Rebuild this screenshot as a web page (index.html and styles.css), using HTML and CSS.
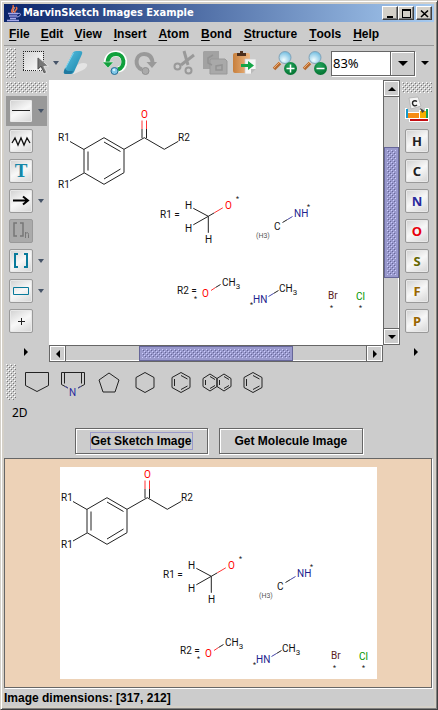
FILE: index.html
```html
<!DOCTYPE html>
<html lang="en">
<head>
<meta charset="utf-8">
<title>MarvinSketch Images Example</title>
<link rel="stylesheet" href="styles.css">
</head>
<body>
<svg class="defs" width="0" height="0" aria-hidden="true">
  <defs>
    <linearGradient id="gPaper" x1="0" y1="0" x2="1" y2="1"><stop offset="0" stop-color="#d4d4d4"/><stop offset="1" stop-color="#fff"/></linearGradient>
    <linearGradient id="gBlue" x1="0" y1="0" x2="1" y2="1"><stop offset="0" stop-color="#5cc3e4"/><stop offset="1" stop-color="#1583a8"/></linearGradient>
    <linearGradient id="gBoard" x1="0" y1="0" x2="1" y2="0"><stop offset="0" stop-color="#c77f3c"/><stop offset="1" stop-color="#efb985"/></linearGradient>
    <radialGradient id="gLens" cx=".4" cy=".7" r=".8"><stop offset="0" stop-color="#f2fdff"/><stop offset="1" stop-color="#5fb4dc"/></radialGradient>
    <radialGradient id="gBall" cx=".4" cy=".3" r=".8"><stop offset="0" stop-color="#21a45c"/><stop offset="1" stop-color="#006c2b"/></radialGradient>
  </defs>
</svg>
<div class="window">
  <header class="titlebar">
    <svg class="cup" width="16" height="18" viewBox="0 0 16 18" fill="none">
      <path d="M7 9C3 6 9 5 7 1M9 9c-2-3 4-3 1-6" stroke="#f07040" stroke-width="1.5"/>
      <path d="M8 8c-2-2 1-3 0-5" stroke="#fbd0b8"/>
      <path d="M2 9.500h10M3 12h8M4 14.500h6M1 16.500h12" stroke="#a6a9e8" stroke-width="1.500"/>
      <path d="M3 10.700h9M4 13.300h7" stroke="#4a50a8"/>
      <path d="M12 9.500c4-1 3 3-1 3.500" stroke="#a6a9e8"/>
    </svg>
    <h1>MarvinSketch Images Example</h1>
    <div class="winbtns">
      <button aria-label="Minimize"><svg width="9" height="9" viewBox="0 0 9 9"><path d="M1 7h6v2H1z"/></svg></button>
      <button aria-label="Maximize"><svg width="9" height="9" viewBox="0 0 9 9"><path fill-rule="evenodd" d="M0 0h9v9H0zM1 2v6h7V2z"/></svg></button>
      <button class="close" aria-label="Close"><svg width="9" height="9" viewBox="0 0 9 9"><path d="M1 1.500l7 6.500M8 1.500L1 8" stroke="#000" stroke-width="1.600"/></svg></button>
    </div>
  </header>

  <nav class="menubar">
    <button><u>F</u>ile</button><button><u>E</u>dit</button><button><u>V</u>iew</button><button><u>I</u>nsert</button><button><u>A</u>tom</button><button><u>B</u>ond</button><button><u>S</u>tructure</button><button><u>T</u>ools</button><button><u>H</u>elp</button>
  </nav>

  <div class="toolbar">
    <div class="grip grip-tall"></div>
    <div class="group">
      <button class="tool wide" aria-label="Select">
        <svg width="26" height="24" viewBox="0 0 26 24"><path d="M1 1h19v19H1z" fill="url(#gPaper)"/><path d="M0 .5h21M0 19.500h21M.5 0v20M20.500 0v20" fill="none" stroke="#222" stroke-dasharray="1 1"/><path d="M14.500 5.500v14l3.300-3 3 6.500 3-1.500-3-6 4.500-.5z" fill="#777" stroke="#eee" stroke-width=".8"/><path d="M15 7v11l3-3 3.500 7" fill="none" stroke="#555"/></svg>
      </button>
      <svg class="drop" width="6" height="4" viewBox="0 0 6 4"><path d="M0 0h6L3 4z"/></svg>
      <button class="tool" aria-label="Erase">
        <svg width="24" height="24" viewBox="0 0 24 24"><path d="M4 22l12-9q5-2 8 0 1 3-4 6l-9 4z" fill="#e4e4e4"/><path d="M10 1.500Q11 0 13 0h4q3 0 2 3l-8 18q-1 2-3 2H3q-3 0-2-3z" fill="url(#gBlue)"/><path d="M2 17q1 3 3 3h5l-1 2q-1 1-3 1H3q-3 0-2-3z" fill="#2079a0"/><path d="M10.500 2L2.500 17" stroke="#7fd4ee"/></svg>
      </button>
    </div>
    <div class="group">
      <button class="tool" aria-label="Undo">
        <svg width="24" height="24" viewBox="0 0 24 24" fill="none"><path d="M4 13C3 6 8 2.500 13 2.500c10 0 11 15 2 16" stroke="#fff" stroke-width="6"/><path d="M4.500 13C4.500 6 8 3 13 3c9 0 10 13 2 15.500" stroke="#10a03c" stroke-width="4"/><path d="M-.5 11h11L5 17z" fill="#10a03c" stroke="#e4f4e8" stroke-width=".6"/><circle cx="11.500" cy="20" r="3.500" fill="#80c8e8" stroke="#266c94"/><circle cx="11" cy="19" r="1.300" fill="#d4f2ff"/></svg>
      </button>
      <button class="tool" aria-label="Redo" disabled>
        <svg width="24" height="24" viewBox="0 0 24 24" fill="none"><path d="M19.500 13C19.500 6 16 3 11 3 2 3 1 16 9 18.500" stroke="#999" stroke-width="4"/><path d="M13.500 11h10.500L19 17z" fill="#999"/><circle cx="12.500" cy="20" r="3.500" fill="#aaa" stroke="#919191"/></svg>
      </button>
    </div>
    <div class="group">
      <button class="tool" aria-label="Cut" disabled>
        <svg width="24" height="24" viewBox="0 0 24 24" fill="none" stroke="#999"><path d="M11 0l4 14M21 4L8 14" stroke-width="3"/><circle cx="4.500" cy="15.500" r="3" stroke-width="2"/><circle cx="15.500" cy="19.500" r="3" stroke-width="2"/></svg>
      </button>
      <button class="tool" aria-label="Copy" disabled>
        <svg width="24" height="24" viewBox="0 0 24 24"><path d="M1 0h15v18H0V1z" fill="#a2a2a2"/><path d="M8 8h14l2 2v13H7V9z" fill="#a9a9a9" stroke="#999"/><path d="M10 4L5 7v5l4 2M19 14v5h-6v-4z" fill="none" stroke="#939393" stroke-width="1.500"/></svg>
      </button>
      <button class="tool" aria-label="Paste">
        <svg width="24" height="24" viewBox="0 0 24 24"><rect y="2" width="17" height="20" rx="2" fill="url(#gBoard)"/><path d="M4 4V2h3V0h3v2h3v3H4z" fill="#4d2f1c"/><path d="M12 8h11v10l-5 5h-6z" fill="#f5f5f5" stroke="#ccc" stroke-width=".7"/><path d="M23 18h-5v5z" fill="#bbb"/><path d="M8 13h7v-3l6 4.500-6 4.500v-3H8z" fill="#14a647"/></svg>
      </button>
    </div>
    <div class="group">
      <button class="tool" aria-label="Zoom in">
        <svg width="24" height="24" viewBox="0 0 24 24"><path d="M7 12l-6 6" stroke="#b76a2f" stroke-width="3.500"/><path d="M7 11l-6 6" stroke="#f0ae74"/><circle cx="12" cy="6.500" r="6" fill="url(#gLens)" stroke="#84a4b8"/><circle cx="17.500" cy="17.500" r="6.500" fill="url(#gBall)"/><path d="M13.500 17.500h8M17.500 13.500v8" stroke="#fff" stroke-width="1.500"/></svg>
      </button>
      <button class="tool" aria-label="Zoom out">
        <svg width="24" height="24" viewBox="0 0 24 24"><path d="M7 12l-6 6" stroke="#b76a2f" stroke-width="3.500"/><path d="M7 11l-6 6" stroke="#f0ae74"/><circle cx="12" cy="6.500" r="6" fill="url(#gLens)" stroke="#84a4b8"/><circle cx="17.500" cy="17.500" r="6.500" fill="url(#gBall)"/><path d="M13.500 17.500h8" stroke="#fff" stroke-width="1.500"/></svg>
      </button>
    </div>
    <div class="combo">
      <input type="text" value="83%" aria-label="Zoom level">
      <button aria-label="Show zoom levels"><svg width="10" height="5" viewBox="0 0 10 5"><path d="M0 0h10L5 5z"/></svg></button>
    </div>
    <svg class="more" width="8" height="4" viewBox="0 0 8 4"><path d="M0 0h8L4 4z"/></svg>
  </div>

  <main class="work">
    <div class="side">
      <div class="grip"></div>
      <div class="slot on"><button class="key" aria-label="Single bond"><svg width="24" height="24" viewBox="0 0 24 24"><path d="M3 11.500h18" stroke="#222"/></svg></button><svg class="drop" width="6" height="4" viewBox="0 0 6 4"><path d="M0 0h6L3 4z"/></svg></div>
      <div class="slot"><button class="key" aria-label="Chain"><svg width="24" height="24" viewBox="0 0 24 24"><path d="M3 14l3-5 3 7 3-7 3 7 3-7 3 5" fill="none" stroke="#111" stroke-width="1.300"/></svg></button></div>
      <div class="slot"><button class="key text-key" aria-label="Text">T</button></div>
      <div class="slot"><button class="key" aria-label="Arrow"><svg width="24" height="24" viewBox="0 0 24 24"><path d="M4 11.500h14M14 7.500l5 4-5 4" fill="none" stroke="#000" stroke-width="2"/></svg></button><svg class="drop" width="6" height="4" viewBox="0 0 6 4"><path d="M0 0h6L3 4z"/></svg></div>
      <div class="slot"><button class="key off" aria-label="Repeating unit" disabled><svg width="24" height="24" viewBox="0 0 24 24"><path d="M8 4H5v13h3M11 4h3v13h-3" fill="none" stroke="#777" stroke-width="1.500"/><path d="M16.500 19v-6M16.500 14.500q3-2 3 1V19" fill="none" stroke="#777"/></svg></button></div>
      <div class="slot"><button class="key" aria-label="Brackets"><svg width="24" height="24" viewBox="0 0 24 24"><path d="M9 5H6v13h3M15 5h3v13h-3" fill="none" stroke="#087a9b" stroke-width="2"/></svg></button><svg class="drop" width="6" height="4" viewBox="0 0 6 4"><path d="M0 0h6L3 4z"/></svg></div>
      <div class="slot"><button class="key" aria-label="Rectangle"><svg width="24" height="24" viewBox="0 0 24 24"><path d="M4.500 8.500h15v7h-15z" fill="none" stroke="#087a9b"/></svg></button><svg class="drop" width="6" height="4" viewBox="0 0 6 4"><path d="M0 0h6L3 4z"/></svg></div>
      <div class="slot"><button class="key" aria-label="Increase charge"><svg width="24" height="24" viewBox="0 0 24 24"><path d="M9 12.500h7M12.500 9v7" stroke="#222"/></svg></button></div>
      <button class="next" aria-label="More tools"><svg width="4" height="8" viewBox="0 0 4 8"><path d="M0 0l4 4-4 4z"/></svg></button>
    </div>

    <div class="canvas">
      <svg class="mol" width="317" height="212" viewBox="57 107 317 212">
        <g class="bonds">
          <path d="M104 137.700L124 149.300V172.700L104 184.300 84 172.700V149.300zM104 142l16.500 9.500M120.500 169L104 179M88 151.500v19M70 141.500l14 8M70 181l14-8M124 149.300l20.300-11.600 20 11.600 14-8M142 138v-9M146.500 138v-9M208.300 216.300l-15-8M208.300 216.300l-15 8.500M208.300 216.300v16.500M208.300 216.300l6-3.500M282.500 222.500l5-3M215.500 287.500l5-3M273.500 293.500l5-3"/>
          <path class="o" d="M142 129v-8.500M146.500 129v-8.500M214.300 212.800l8.500-5M211 290.500l4.500-3"/>
          <path class="n" d="M287.500 219.500l5-3M268.500 296.500l5-3"/>
        </g>
        <g class="atoms">
          <text x="58" y="141">R1</text><text x="58" y="188">R1</text><text x="178" y="141">R2</text>
          <text x="160" y="218">R1 =</text><text x="177" y="294">R2 =</text>
          <text x="185" y="209">H</text><text x="185" y="232">H</text><text x="205" y="243">H</text><text x="274" y="230">C</text>
          <text class="small" x="256" y="238">(H3)</text>
          <text x="222" y="286">CH<tspan class="sub" dy="3">3</tspan></text><text x="279" y="292">CH<tspan class="sub" dy="3">3</tspan></text>
          <text class="o" x="141" y="118">O</text><text class="o" x="225" y="209">O</text><text class="o" x="202" y="297">O</text>
          <text class="n" x="294" y="217">NH</text><text class="n" x="253" y="303">HN</text>
          <text class="br" x="328" y="299">Br</text><text class="cl" x="356" y="300">Cl</text>
          <g class="star"><text x="236" y="201">*</text><text x="307" y="209">*</text><text x="194" y="301">*</text><text x="250" y="307">*</text><text x="330" y="310">*</text><text x="359" y="310">*</text></g>
        </g>
      </svg>
    </div>

    <div class="scroll vert">
      <button aria-label="Scroll up"><svg width="8" height="4" viewBox="0 0 8 4"><path d="M4 0l4 4H0z"/></svg></button>
      <div class="track"><div class="thumb"></div></div>
      <button aria-label="Scroll down"><svg width="8" height="4" viewBox="0 0 8 4"><path d="M0 0h8L4 4z"/></svg></button>
    </div>
    <div class="scroll horiz">
      <button aria-label="Scroll left"><svg width="4" height="8" viewBox="0 0 4 8"><path d="M4 0v8L0 4z"/></svg></button>
      <div class="track"><div class="thumb"></div></div>
      <button aria-label="Scroll right"><svg width="4" height="8" viewBox="0 0 4 8"><path d="M0 0l4 4-4 4z"/></svg></button>
    </div>

    <div class="side elements">
      <div class="grip"></div>
      <div class="slot"><button class="tool" aria-label="Periodic table">
        <svg width="24" height="24" viewBox="0 0 24 24"><path d="M0 9h2v4h12v-2h6V9h4v11H0z" fill="#fff"/><path d="M1 10h2v9H1z" fill="#1499c9"/><path d="M3 14h11v5H3z" fill="#f78b12"/><path d="M15 12h6v7h-6z" fill="#f7ae00"/><path d="M21 10h2v9h-2z" fill="#12a05a"/><path d="M4 20h20v3H4z" fill="#fff"/><path d="M5 20h18v2H5z" fill="#c40d12"/><path d="M15 9l5 3-3 2z" fill="#444"/><path d="M4-1l9-1 3 9-10 3z" fill="#f4f4f4" stroke="#aaa" stroke-width=".7"/><path d="M12 2.500C10 1 7 2 7.500 4.500S10 7.500 12 6" fill="none" stroke="#222" stroke-width="1.400"/></svg>
      </button></div>
      <div class="slot"><button class="key">H</button></div>
      <div class="slot"><button class="key">C</button></div>
      <div class="slot"><button class="key n">N</button></div>
      <div class="slot"><button class="key o">O</button></div>
      <div class="slot"><button class="key s">S</button></div>
      <div class="slot"><button class="key f">F</button></div>
      <div class="slot"><button class="key f">P</button></div>
      <button class="next" aria-label="More elements"><svg width="4" height="8" viewBox="0 0 4 8"><path d="M0 0l4 4-4 4z"/></svg></button>
    </div>
  </main>

  <div class="rings">
    <div class="grip grip-tall"></div>
    <button class="tool" aria-label="Cyclopentane"><svg width="24" height="24" viewBox="0 0 24 24"><path d="M.5 2.500h23v13L12 21.500.5 15.500z"/></svg></button>
    <button class="tool" aria-label="Pyrrole"><svg width="24" height="24" viewBox="0 0 24 24"><path d="M7 18L.5 14.500v-12h23v12L17 18M3.500 3v10.500M20.500 3v10.500"/><path class="n" d="M7 18l-3-1.700M17 18l3-1.700"/><text class="n" x="8" y="26">N</text></svg></button>
    <button class="tool" aria-label="Cyclopentane small"><svg width="24" height="24" viewBox="0 0 24 24"><path d="M12 3l10 7-4 12H6L2 10z"/></svg></button>
    <button class="tool" aria-label="Cyclohexane"><svg width="24" height="24" viewBox="0 0 24 24"><path d="M12 2.500l9 5v10l-9 5-9-5v-10z"/></svg></button>
    <button class="tool" aria-label="Benzene"><svg width="24" height="24" viewBox="0 0 24 24"><path d="M12 2.500l9 5v10l-9 5-9-5v-10zM5.500 9v7M12 5.500l6.500 3.500M12 19.500l6.500-3.500"/></svg></button>
    <button class="tool" aria-label="Naphthalene"><svg width="30" height="24" viewBox="0 0 30 24"><path d="M8 4l7 4.500v8L8 21l-7-4.500v-8zM22 4l7 4.500v8L22 21l-7-4.500v-8zM3.500 10v5M8 6.500l5 3M8 18.500l5-3M17.500 10v5M22 6.500l5 3M22 18.500l5-3"/></svg></button>
    <button class="tool" aria-label="Benzene alternate"><svg width="24" height="24" viewBox="0 0 24 24"><path d="M12 2.500l9 5v10l-9 5-9-5v-10zM5.500 9v7M12 5.500l6.500 3.500M12 19.500l6.500-3.500"/></svg></button>
  </div>
  <p class="mode">2D</p>

  <div class="actions">
    <button class="focused"><span>Get Sketch Image</span></button>
    <button><span>Get Molecule Image</span></button>
  </div>

  <section class="preview">
    <svg class="mol" width="317" height="212" viewBox="57 107 317 212">
      <g class="bonds">
        <path d="M104 137.700L124 149.300V172.700L104 184.300 84 172.700V149.300zM104 142l16.500 9.500M120.500 169L104 179M88 151.500v19M70 141.500l14 8M70 181l14-8M124 149.300l20.300-11.600 20 11.600 14-8M142 138v-9M146.500 138v-9M208.300 216.300l-15-8M208.300 216.300l-15 8.500M208.300 216.300v16.500M208.300 216.300l6-3.500M282.500 222.500l5-3M215.500 287.500l5-3M273.500 293.500l5-3"/>
        <path class="o" d="M142 129v-8.500M146.500 129v-8.500M214.300 212.800l8.500-5M211 290.500l4.500-3"/>
        <path class="n" d="M287.500 219.500l5-3M268.500 296.500l5-3"/>
      </g>
      <g class="atoms">
        <text x="58" y="141">R1</text><text x="58" y="188">R1</text><text x="178" y="141">R2</text>
        <text x="160" y="218">R1 =</text><text x="177" y="294">R2 =</text>
        <text x="185" y="209">H</text><text x="185" y="232">H</text><text x="205" y="243">H</text><text x="274" y="230">C</text>
        <text class="small" x="256" y="238">(H3)</text>
        <text x="222" y="286">CH<tspan class="sub" dy="3">3</tspan></text><text x="279" y="292">CH<tspan class="sub" dy="3">3</tspan></text>
        <text class="o" x="141" y="118">O</text><text class="o" x="225" y="209">O</text><text class="o" x="202" y="297">O</text>
        <text class="n" x="294" y="217">NH</text><text class="n" x="253" y="303">HN</text>
        <text class="br" x="328" y="299">Br</text><text class="cl" x="356" y="300">Cl</text>
        <g class="star"><text x="236" y="201">*</text><text x="307" y="209">*</text><text x="194" y="301">*</text><text x="250" y="307">*</text><text x="330" y="310">*</text><text x="359" y="310">*</text></g>
      </g>
    </svg>
  </section>
  <footer class="status">Image dimensions: [317, 212]</footer>
</div>
</body>
</html>
```

FILE: styles.css
```css
* { box-sizing: border-box; }

body {
  margin: 0;
  font: bold 12px/14px "Liberation Sans", Arial, sans-serif;
  color: #000;
}

button {
  display: flex;
  align-items: center;
  justify-content: center;
  margin: 0;
  padding: 0;
  border: 0;
  background: none;
  color: inherit;
  font: inherit;
}

svg { display: block; flex: none; }
.defs { position: absolute; }

.window {
  display: flex;
  flex-direction: column;
  min-height: 100vh;
  background: #ccc;
  border: 1px solid;
  border-color: #d4d0c8 #404040 #404040 #d4d0c8;
  box-shadow: inset 1px 1px #fff, inset -1px -1px #808080, inset 3px 3px #d4d0c8, inset -3px -3px #d4d0c8;
  padding: 3px 3px 2px;
}

/* Title bar */
.titlebar {
  display: flex;
  align-items: center;
  height: 18px;
  padding: 0 2px;
  background: linear-gradient(90deg, #0a246a, #a6caf0);
}
.titlebar h1 {
  flex: 1;
  margin: 0 0 0 1px;
  color: #fff;
  font: bold 11px/18px "DejaVu Sans Condensed", "DejaVu Sans", sans-serif;
}
.winbtns { display: flex; }
.winbtns button {
  width: 16px;
  height: 14px;
  background: #d4d0c8;
  border: 1px solid;
  border-color: #fff #404040 #404040 #fff;
  box-shadow: inset -1px -1px #808080;
}
.winbtns .close { margin-left: 2px; }

/* Menu bar */
.menubar {
  display: flex;
  height: 24px;
  border-bottom: 1px solid #999;
}
.menubar button { padding: 0 6px 0 5px; }
.menubar button:nth-child(n+4) { padding-left: 6px; }
.menubar u { text-underline-offset: 2px; }

/* Textured drag handle */
.grip {
  flex: none;
  height: 11px;
  margin: 0 2px;
  background-image:
    conic-gradient(at 1px 1px, transparent 75%, #fff 0),
    conic-gradient(at 1px 1px, transparent 75%, #fff 0),
    conic-gradient(at 1px 1px, transparent 75%, #777 0),
    conic-gradient(at 1px 1px, transparent 75%, #777 0);
  background-size: 4px 4px;
  background-position: 0 0, 2px 2px, 1px 1px, 3px 3px;
}
.grip-tall { width: 10px; height: auto; align-self: stretch; }

/* Main toolbar */
.toolbar {
  display: flex;
  align-items: center;
  height: 34px;
  padding: 2px 0;
}
.tool { width: 24px; height: 24px; }
.tool svg { overflow: visible; }
.wide { width: 26px; }
.group { display: flex; align-items: center; gap: 6px; margin-right: 16px; }
.toolbar .grip + .group { margin-left: 5px; gap: 4px; }
.group:has(+ .combo) { margin-right: 4px; }
.drop { fill: #465468; }
.combo {
  display: flex;
  flex: 1;
  height: 25px;
  border: 1px solid #666;
  box-shadow: 1px 1px #fff;
}
.combo input {
  flex: 1;
  min-width: 0;
  width: 0;
  padding: 0 1px;
  border: 0;
  border-radius: 0;
  background: #fff;
  font: 13px/20px "Noto Sans", sans-serif;
}
.combo button { width: 24px; border-left: 1px solid #666; box-shadow: inset 1px 1px #fff; }
.more { margin: 0 5px 0 6px; }

/* Work area */
.work {
  display: grid;
  grid-template-columns: 45px 1fr 17px 34px;
  grid-template-rows: 1fr 17px;
}
.side {
  grid-row: 1 / 3;
  grid-column: 1;
  display: flex;
  flex-direction: column;
  padding-top: 2px;
}
.elements { grid-column: 4; }
.slot {
  display: flex;
  align-items: center;
  gap: 5px;
  height: 30px;
  margin: 0 2px;
  padding-left: 3px;
}
.grip + .slot { margin-top: 3px; }
.on { background: #999; }
.key {
  width: 24px;
  height: 24px;
  border: 1px solid #999;
  border-radius: 2px;
  background: linear-gradient(150deg, #d0d0d0, #f8f8f8 50%, #d4d4d4);
  box-shadow: inset 0 0 0 1px #e8e8e8;
  font: bold 13px/22px "Noto Sans", sans-serif;
  color: #222;
}
.key svg { margin: -1px; }
.text-key { color: #1587a8; font-family: "Liberation Serif", serif; font-size: 19px; }
.off { background: #aaa; box-shadow: none; }
.key.n { color: #2a2a9c; }
.key.o { color: #e8000c; }
.key.s { color: #666600; }
.key.f { color: #996600; }
.next { width: 100%; flex: 1; min-height: 26px; padding: 6px 2px 0 0; }

.canvas {
  grid-column: 2;
  grid-row: 1;
  overflow: hidden;
  padding: 27px 0 0 8px;
  background: #fff;
}
.mol { overflow: visible; }

/* Scroll bars */
.scroll { display: flex; border: 1px solid #666; box-shadow: inset -1px -1px #fff; }
.scroll button { flex: none; width: 15px; height: 15px; border: 1px solid #fff; }
.vert { grid-column: 3; grid-row: 1; flex-direction: column; }
.horiz { grid-column: 2; grid-row: 2; }
.track { display: flex; flex: 1; border: 0 solid #666; }
.track::before, .track::after { content: ""; flex: 51; }
.vert .track { flex-direction: column; border-width: 1px 0; }
.horiz .track { border-width: 0 1px; }
.horiz .track::before, .horiz .track::after { flex: 73; }
.thumb {
  flex: 130;
  border: 1px solid #666699;
  box-shadow: inset 0 0 0 2px #9999cc;
  background-color: #9999cc;
  background-image:
    conic-gradient(at 1px 1px, transparent 75%, #ccccff 0),
    conic-gradient(at 1px 1px, transparent 75%, #ccccff 0),
    conic-gradient(at 1px 1px, transparent 75%, #666699 0),
    conic-gradient(at 1px 1px, transparent 75%, #666699 0);
  background-size: 4px 4px;
  background-position: 0 0, 2px 2px, 1px 1px, 3px 3px;
}
.horiz .thumb { flex: 154; }

/* Drawn molecules */
.bonds path { fill: none; stroke: #222; }
.bonds .o { stroke: #f33; }
.bonds .n { stroke: #44a; }
.atoms { font: 10px Roboto, sans-serif; fill: #111; }
.atoms .o { fill: #f00; }
.atoms .n { fill: #22228e; }
.atoms .br { fill: #5c2020; }
.atoms .cl { fill: #009600; }
.atoms .small { font-size: 7px; fill: #555; }
.atoms .sub { font-size: 8px; }
.star { font-size: 7px; }

/* Ring templates */
.rings { display: flex; align-items: center; gap: 12px; height: 40px; padding: 2px 0; }
.rings .grip { margin-right: -3px; }
.rings path { fill: none; stroke: #222; }
.rings .n { stroke: #5555aa; }
.rings text.n { fill: #2a2aa0; stroke: none; font: 10px Roboto, sans-serif; }

.mode { margin: 0; padding: 3px 8px; font: 12px/16px "Noto Sans", sans-serif; }

.actions { display: flex; justify-content: center; gap: 11px; padding: 4px 0; }
.actions button {
  height: 26px;
  padding: 0 14px;
  border: 1px solid #666;
  box-shadow: inset 1px 1px #fff, 1px 1px #fff;
}
.actions span { padding: 1px 0; border: 1px solid transparent; }
.actions .focused span { border-color: #9999cc; }

.preview {
  display: flex;
  flex: 1;
  justify-content: center;
  align-items: center;
  margin-right: 2px;
  border: 1px solid #666;
  box-shadow: 1px 1px #fff;
  background: #edd2b7;
}
.preview .mol { background: #fff; overflow: hidden; }
.status { height: 19px; line-height: 20px; }
```
